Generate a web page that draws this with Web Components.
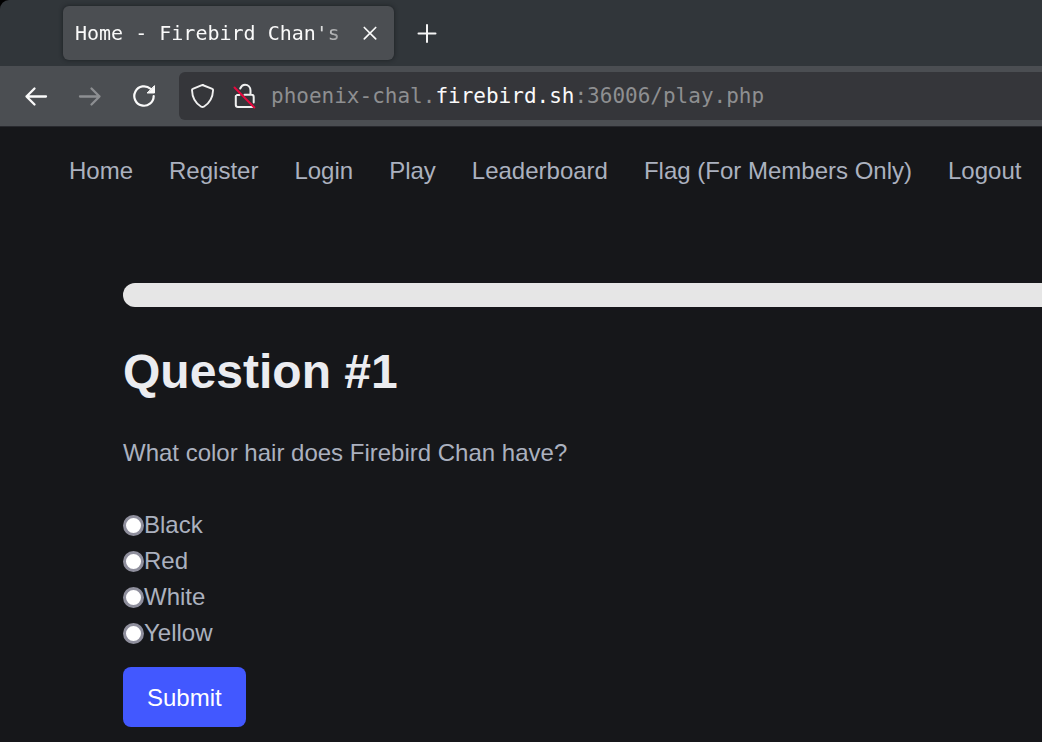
<!DOCTYPE html>
<html lang="en">
<head>
<meta charset="utf-8">
<title>Home - Firebird Chan's</title>
<style>
html { background: #16171a; }
body { margin: 0; background: #16171a; color: #abb1bf; font: 24px/36px "Liberation Sans", Arial, sans-serif; overflow-x: hidden; }
</style>
</head>
<body>
<browser-tabs><browser-tab>Home - Firebird Chan's</browser-tab></browser-tabs>
<browser-toolbar>
  <span slot="before">phoenix-chal.</span><span slot="host">firebird.sh</span><span slot="after">:36006/play.php</span>
</browser-toolbar>
<site-nav>
  <nav-item href="#home">Home</nav-item>
  <nav-item href="#register">Register</nav-item>
  <nav-item href="#login">Login</nav-item>
  <nav-item href="#play">Play</nav-item>
  <nav-item href="#leaderboard">Leaderboard</nav-item>
  <nav-item href="#flag">Flag (For Members Only)</nav-item>
  <nav-item href="#logout">Logout</nav-item>
</site-nav>
<quiz-question options="Black,Red,White,Yellow">
  <span slot="title">Question #1</span>
  <span slot="prompt">What color hair does Firebird Chan have?</span>
</quiz-question>
<script>
const define = (name, html, setup) => customElements.define(name, class extends HTMLElement {
  constructor() {
    super();
    this.attachShadow({ mode: 'open' }).innerHTML = html;
  }
  connectedCallback() { if (setup) setup(this, this.shadowRoot); }
});

define('browser-tabs', `
<style>
:host { display: block; background: #000; }
.strip { display: flex; align-items: center; height: 66px; box-sizing: border-box; padding-left: 63px; background: #31363a; border-top-left-radius: 9px; }
button { display: flex; padding: 0; border: 0; background: none; color: #f5f5f5; margin-left: 22px; }
</style>
<div class="strip" role="tablist"><slot></slot>
<button type="button" aria-label="New tab"><svg width="22" height="22" viewBox="0 0 22 22" fill="none" stroke="currentColor" stroke-width="2" stroke-linecap="round"><path d="M11 3v17M2.5 11.500h17"/></svg></button></div>`);

define('browser-tab', `
<style>
:host { display: flex; align-items: center; box-sizing: border-box; width: 331px; height: 54px; padding: 0 15px 0 12px; border-radius: 6px; background: #4b4e52; box-shadow: 0 0 4px #15191ccc; color: #fafafa; font: 20px/32px "DejaVu Sans Mono", monospace; }
.title { flex: 1; overflow: hidden; white-space: nowrap; -webkit-mask-image: linear-gradient(to right, #000 calc(100% - 48px), transparent); mask-image: linear-gradient(to right, #000 calc(100% - 48px), transparent); }
button { display: flex; padding: 0; border: 0; background: none; color: inherit; }
</style>
<span class="title"><slot></slot></span>
<button type="button" aria-label="Close tab"><svg width="18" height="18" viewBox="0 0 18 18" fill="none" stroke="currentColor" stroke-width="1.700" stroke-linecap="round"><path d="M3.300 3.500l11.400 11.400M14.700 3.500L3.300 14.900"/></svg></button>`);

define('browser-toolbar', `
<style>
:host { display: flex; align-items: center; height: 60px; background: #4b4e52; border-bottom: 1px solid #28292e; color: #fafafa; }
.buttons { display: flex; gap: 30px; padding: 0 23px 0 24px; }
button { display: flex; padding: 0; border: 0; background: none; color: inherit; }
button:disabled { color: #8d8f92; }
.address { flex: 1; display: flex; align-items: center; gap: 14px; height: 48px; padding-left: 12px; background: #35363a; border-radius: 6px 0 0 6px; color: #f0f0f0; }
.url { color: #8e8f91; font: 21px/32px "DejaVu Sans Mono", monospace; white-space: nowrap; display: flex; }
.host { color: #fafafa; }
</style>
<div class="buttons">
<button type="button" aria-label="Back"><svg width="24" height="24" viewBox="0 0 24 24" fill="none" stroke="currentColor" stroke-width="2.300" stroke-linecap="round" stroke-linejoin="round"><path d="M22 12.500H2.500M10.500 4.500l-8 8 8 8"/></svg></button>
<button type="button" aria-label="Forward" disabled><svg width="24" height="24" viewBox="0 0 24 24" fill="none" stroke="currentColor" stroke-width="2.300" stroke-linecap="round" stroke-linejoin="round"><path d="M2 12.500h19.500M13.500 4.500l8 8-8 8"/></svg></button>
<button type="button" aria-label="Reload"><svg width="24" height="24" viewBox="0 0 24 24" fill="none" stroke="currentColor" stroke-width="2.200" stroke-linecap="round"><path d="M21.700 12A9.700 9.700 0 1 1 18.500 4.800"/><path d="M22.500 2v7h-7z" fill="currentColor" stroke-width="1" stroke-linejoin="round"/></svg></button>
</div>
<div class="address">
<svg width="24" height="26" viewBox="0 0 24 26" fill="none" stroke="currentColor" stroke-width="1.900" stroke-linejoin="round"><path d="M11.500 2L21.300 5.800c.6.200.8.600.8 1.200C21.800 14.500 19 20 12.800 23.700c-.9.500-1.700.5-2.600 0C4 20 1.200 14.500 1 7c0-.6.200-1 .8-1.200L10.300 2.300c.8-.3 1.600-.3 2.400 0"/></svg>
<svg width="28" height="26" viewBox="-4 0 28 26" fill="none" stroke="currentColor" stroke-width="2" stroke-linecap="round" stroke-linejoin="round"><path d="M7.200 5.500C8.300 3 10 1.700 12 1.700c3.200 0 5.500 2.500 5.500 5.800v4.300h1c1.300 0 2.200.8 2.200 2.100v5.600M2.800 13v8.800c0 1.500.8 2.200 2.200 2.200h14.500M4 12h2.500M11.500 11.800h6"/><path d="M1.500 4.500L21.300 24.500" stroke="#e8083e"/></svg>
<span class="url"><slot name="before"></slot><span class="host"><slot name="host"></slot></span><slot name="after"></slot></span>
</div>`);

define('site-nav', `
<style>
:host { display: block; }
nav { display: flex; padding: 26px 0 0 51px; }
</style>
<nav><slot></slot></nav>`);

define('nav-item', `
<style>
:host { display: block; }
a { display: block; padding: 0 18px; color: inherit; text-decoration: none; white-space: nowrap; }
</style>
<a><slot></slot></a>`, (el, root) => { root.querySelector('a').href = el.getAttribute('href'); });

define('quiz-question', `
<style>
:host { display: block; padding: 94px 0 15px 123px; }
.progress { height: 24px; border-radius: 12px 0 0 12px; background: #e6e6e6; }
h1 { margin: 36px 0 0; color: #ebecf0; font-size: 48px; line-height: 58px; }
p { margin: 34px 0 36px; }
.option { display: flex; align-items: center; }
input { appearance: none; box-sizing: border-box; width: 21px; height: 21px; margin: 0; border: 3px solid #8f8f9d; border-radius: 50%; background: #fff; }
input:checked { border-color: #4258ff; }
button { margin-top: 16px; height: 60px; padding: 2px 24px 0; border: 0; border-radius: 8px; background: #4258ff; color: #fff; font: inherit; }
</style>
<div class="progress" role="progressbar" aria-label="Quiz progress" aria-valuenow="0"></div>
<h1><slot name="title"></slot></h1>
<form><p><slot name="prompt"></slot></p><div class="options"></div>
<button type="submit">Submit</button></form>`, (el, root) => {
  root.querySelector('.options').innerHTML = el.getAttribute('options').split(',').map((o, i) =>
    `<div class="option"><input type="radio" name="answer" id="o${i}" value="${o}"><label for="o${i}">${o}</label></div>`).join('');
  root.querySelector('form').addEventListener('submit', e => e.preventDefault());
});
</script>
</body>
</html>
